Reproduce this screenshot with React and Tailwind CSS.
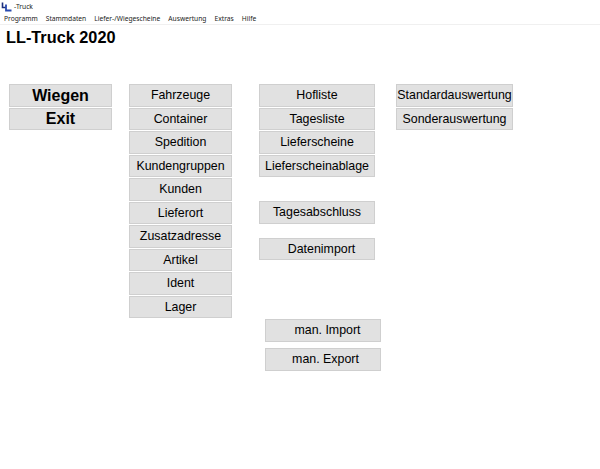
const menu = ["Programm", "Stammdaten", "Liefer-/Wiegescheine", "Auswertung", "Extras", "Hilfe"];
const stamm = ["Fahrzeuge", "Container", "Spedition", "Kundengruppen", "Kunden", "Lieferort", "Zusatzadresse", "Artikel", "Ident", "Lager"];
const listen = ["Hofliste", "Tagesliste", "Lieferscheine", "Lieferscheinablage"];

function Btn({ label, className = "", bold, pad = "" }) {
  return (
    <button className={`flex h-[22.5px] shrink-0 items-center justify-center border border-[#cfcfcf] bg-[#e1e1e1] pt-px text-black ${bold ? "text-[16px] font-bold" : "text-[12.4px]"} ${className}`}>
      <span className={pad}>{label}</span>
    </button>
  );
}

export default function App() {
  return (
    <div className="flex h-[469px] w-[600px] flex-col bg-white font-['Liberation_Sans',sans-serif]">
      <div className="flex h-[14px] items-center pl-[1px] font-['Noto_Sans',sans-serif] text-[6.7px] text-[#222]">
        <svg width="11" height="10" viewBox="0 0 11 10" className="mr-[2px]">
          <path d="M1.5 0.5V5.5H5" stroke="#1c2f7c" strokeWidth="1.6" fill="none" />
          <path d="M5 2.5V8.5H10.5" stroke="#2a4bb0" strokeWidth="1.8" fill="none" />
        </svg>
        <span>-Truck</span>
      </div>
      <div className="flex h-[11px] items-center gap-[8px] border-b border-[#f0f0f0] pl-[4px] font-['Noto_Sans',sans-serif] text-[6.7px] text-[#222]">
        {menu.map((m) => (
          <span key={m}>{m}</span>
        ))}
      </div>
      <h1 className="ml-[6px] mt-[3px] text-[16.3px] leading-[19px] font-bold text-black">LL-Truck 2020</h1>
      <div className="ml-[9px] mt-[37px] flex items-start">
        <div className="flex w-[103px] flex-col gap-px">
          <Btn label="Wiegen" bold />
          <Btn label="Exit" bold />
        </div>
        <div className="ml-[17px] flex w-[103px] flex-col gap-px">
          {stamm.map((s) => (
            <Btn key={s} label={s} />
          ))}
        </div>
        <div className="ml-[27px] flex w-[116px] flex-col gap-px">
          {listen.map((s) => (
            <Btn key={s} label={s} />
          ))}
          <Btn label="Tagesabschluss" className="mt-[23px]" />
          <Btn label="Datenimport" className="mt-[13px]" pad="pl-[9px]" />
          <Btn label="man. Import" className="ml-[6px] mt-[58px] w-[116px]" pad="pl-[9px]" />
          <Btn label="man. Export" className="ml-[6px] mt-[5.5px] w-[116px]" pad="pl-[5px]" />
        </div>
        <div className="ml-[21px] flex w-[117px] flex-col gap-px">
          <Btn label="Standardauswertung" />
          <Btn label="Sonderauswertung" />
        </div>
      </div>
    </div>
  );
}
